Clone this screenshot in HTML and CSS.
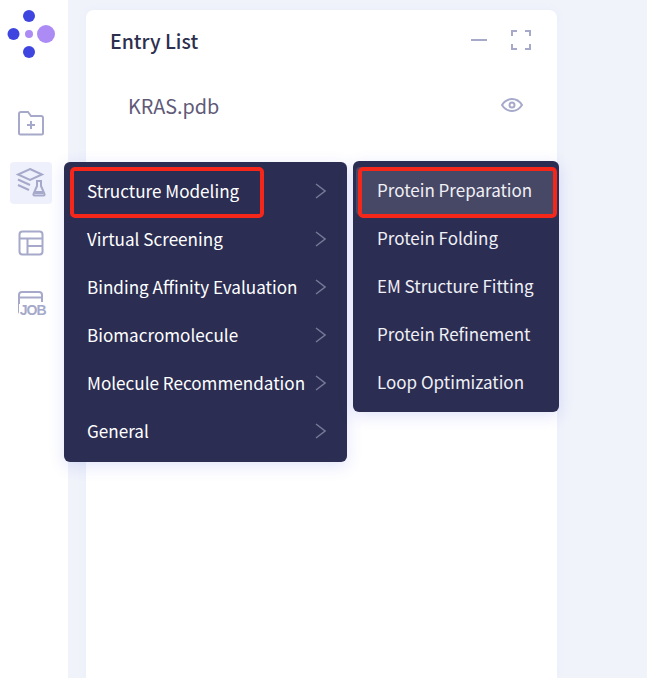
FILE: index.html
```html
<!DOCTYPE html>
<html lang="en">
<head>
    <meta charset="UTF-8">
    <title>Entry List</title>
    <link rel="stylesheet" href="styles.css">
</head>
<body>
    <div class="app">
        <nav class="sidebar">
            <svg class="logo" width="48" height="48" viewBox="0 0 48 48">
                <circle cx="22" cy="9" r="6" fill="#3f46e0"/>
                <circle cx="6.500" cy="27" r="6" fill="#3f46e0"/>
                <circle cx="22" cy="45" r="6" fill="#3f46e0"/>
                <circle cx="22" cy="27" r="4" fill="#ac8bf5"/>
                <circle cx="39" cy="27" r="9" fill="#ac8bf5"/>
            </svg>
            <div class="nav-item">
                <svg width="28" height="28" viewBox="0 0 28 28" fill="none" stroke="#a6a9c9" stroke-width="2">
                    <path d="M2 5a2 2 0 0 1 2-2h7l3 4h10a2 2 0 0 1 2 2v15a1.500 1.500 0 0 1-1.500 1.500h-21A1.500 1.500 0 0 1 2 24z"/>
                    <path d="M14 12v8M10 16h8"/>
                </svg>
            </div>
            <div class="nav-item active">
                <svg width="32" height="32" viewBox="0 0 32 32" fill="none" stroke="#a6a9c9" stroke-width="2">
                    <path d="M15 2l12 5.500-12 5.500L3 7.500z"/>
                    <path d="M3 12.500l12 5.500M3 18l11 5"/>
                    <path d="M21 14h6M22 14v5l-3.500 8a1 1 0 0 0 1 1.500h9a1 1 0 0 0 1-1.500L26 19v-5"/>
                    <path d="M19.500 25.500h9" stroke-width="3"/>
                </svg>
            </div>
            <div class="nav-item">
                <svg width="28" height="28" viewBox="0 0 28 28" fill="none" stroke="#a6a9c9" stroke-width="2">
                    <rect x="2.500" y="2.500" width="23" height="23" rx="3"/>
                    <path d="M2.500 9.500h23M10.500 9.500v16M10.500 17h15"/>
                </svg>
            </div>
            <div class="nav-item job">
                <svg width="28" height="28" viewBox="0 0 28 28" fill="none" stroke="#a6a9c9" stroke-width="2">
                    <path d="M4 24H3.500a1.500 1.500 0 0 1-1.500-1.500V6a3 3 0 0 1 3-3h17a3 3 0 0 1 3 3v7"/>
                    <path d="M2 8.500h23"/>
                </svg>
                <span class="job-label">JOB</span>
            </div>
        </nav>

        <main class="content">
            <section class="card">
                <header class="card-head">
                    <h2>Entry List</h2>
                    <div class="card-tools">
                        <svg width="18" height="20" viewBox="0 0 18 20" fill="none" stroke="#a6a9c9" stroke-width="2">
                            <path d="M1 10h16"/>
                        </svg>
                        <svg width="20" height="20" viewBox="0 0 20 20" fill="none" stroke="#a6a9c9" stroke-width="2">
                            <path d="M6 1H1v5M14 1h5v5M6 19H1v-5M14 19h5v-5"/>
                        </svg>
                    </div>
                </header>
                <div class="entry">
                    <span>KRAS.pdb</span>
                    <svg width="22" height="14" viewBox="0 0 22 14" fill="none" stroke="#a6a9c9" stroke-width="2">
                        <path d="M1 7c2.500-4 6-6 10-6s7.500 2 10 6c-2.500 4-6 6-10 6S3.500 11 1 7z"/>
                        <circle cx="11" cy="7" r="2.500"/>
                    </svg>
                </div>
            </section>
        </main>
    </div>

    <ul class="menu menu-main">
        <li>Structure Modeling<svg class="chev" viewBox="0 0 11 16"><path d="M1 1l9 7-9 7"/></svg></li>
        <li>Virtual Screening<svg class="chev" viewBox="0 0 11 16"><path d="M1 1l9 7-9 7"/></svg></li>
        <li>Binding Affinity Evaluation<svg class="chev" viewBox="0 0 11 16"><path d="M1 1l9 7-9 7"/></svg></li>
        <li>Biomacromolecule<svg class="chev" viewBox="0 0 11 16"><path d="M1 1l9 7-9 7"/></svg></li>
        <li>Molecule Recommendation<svg class="chev" viewBox="0 0 11 16"><path d="M1 1l9 7-9 7"/></svg></li>
        <li>General<svg class="chev" viewBox="0 0 11 16"><path d="M1 1l9 7-9 7"/></svg></li>
    </ul>
    <ul class="menu menu-sub">
        <li class="current">Protein Preparation</li>
        <li>Protein Folding</li>
        <li>EM Structure Fitting</li>
        <li>Protein Refinement</li>
        <li>Loop Optimization</li>
    </ul>

    <div class="mark mark-main"></div>
    <div class="mark mark-sub"></div>
</body>
</html>
```

FILE: styles.css
```css
* {
    box-sizing: border-box;
}
html, body {
    margin: 0;
    height: 100%;
    overflow: hidden;
}
body {
    font-family: "Noto Sans CJK SC", "Noto Sans", sans-serif;
    background-color: #f0f3fa;
    position: relative;
}
.app {
    display: flex;
    height: 678px;
}
.sidebar {
    width: 68px;
    background-color: #fff;
    display: flex;
    flex-direction: column;
    align-items: center;
    flex-shrink: 0;
}
.logo {
    margin: 7px 0 0 -7px;
    overflow: visible;
}
.nav-item {
    width: 42px;
    height: 42px;
    margin-bottom: 18px;
    margin-left: -7px;
    border-radius: 4px;
    display: flex;
    align-items: center;
    justify-content: center;
    position: relative;
}
.sidebar .logo + .nav-item {
    margin-top: 47px;
}
.nav-item.active {
    background-color: #eef0fc;
}
.job-label {
    position: absolute;
    right: 6px;
    bottom: 7px;
    background-color: #fff;
    padding-left: 1px;
    color: #a6a9c9;
    font-family: "Liberation Sans", sans-serif;
    font-size: 14px;
    line-height: 13px;
    font-weight: 700;
    letter-spacing: -1px;
}
.content {
    flex: 1;
    padding: 10px 90px 0 18px;
}
.card {
    width: 471px;
    height: 668px;
    background-color: #fff;
    border-radius: 8px 8px 0 0;
    box-shadow: 0 0 10px rgba(120, 130, 220, 0.05);
    padding: 0 26px 0 24px;
}
.card-head {
    display: flex;
    justify-content: space-between;
    align-items: center;
    height: 60px;
}
.card-head h2 {
    margin: 0;
    font-size: 19.500px;
    font-weight: 500;
    color: #2d2f4e;
}
.card-tools {
    display: flex;
    align-items: center;
    gap: 23px;
}
.entry {
    display: flex;
    justify-content: space-between;
    align-items: center;
    height: 36px;
    margin-top: 17px;
    padding: 0 8px 0 18px;
    font-size: 19.800px;
    color: #5f5a78;
}
.menu {
    position: absolute;
    margin: 0;
    padding: 6px 0;
    list-style: none;
    background-color: #2b2d52;
    border-radius: 6px;
    box-shadow: 0 4px 16px rgba(70, 80, 230, 0.16);
    color: #fff;
    font-size: 17px;
}
.menu li {
    height: 48px;
    padding-bottom: 4px;
    display: flex;
    align-items: center;
    justify-content: space-between;
}
.menu-main {
    left: 64px;
    top: 162px;
    width: 283px;
    height: 300px;
    font-size: 17.100px;
}
.menu-main li {
    padding-left: 23px;
    padding-right: 21px;
}
.menu-sub {
    left: 353px;
    top: 161px;
    width: 206px;
    height: 251px;
}
.menu-sub li {
    padding-left: 24px;
    color: #f0f0f6;
}
.menu-sub .current {
    background-color: #474865;
    border-radius: 4px;
    margin: 0 3px;
    padding-left: 21px;
}
.chev {
    width: 11px;
    height: 16px;
    margin-top: 2px;
    fill: none;
    stroke: #777899;
    stroke-width: 1.500;
    flex-shrink: 0;
}
.mark {
    position: absolute;
    border: 4px solid #f5261a;
    border-radius: 5px;
}
.mark-main {
    left: 70px;
    top: 167px;
    width: 194px;
    height: 51px;
}
.mark-sub {
    left: 358px;
    top: 167px;
    width: 199px;
    height: 51px;
}
```
